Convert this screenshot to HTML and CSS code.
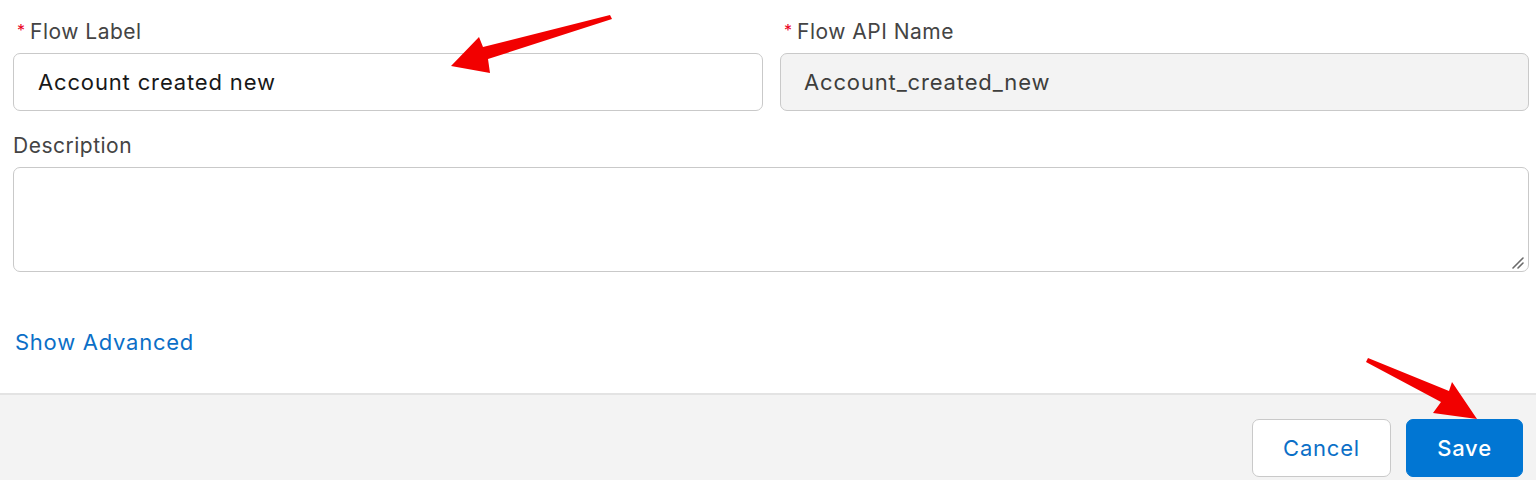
FILE: index.html
```html
<!DOCTYPE html>
<html lang="en">
<head>
<meta charset="utf-8">
<title>New Flow</title>
<link rel="stylesheet" href="styles.css">
</head>
<body>
<div class="page">
  <form class="form">
    <div class="row">
      <div class="field">
        <label class="label"><abbr class="req">*</abbr>Flow Label</label>
        <input class="input" type="text" value="Account created new">
      </div>
      <div class="field">
        <label class="label"><abbr class="req">*</abbr>Flow API Name</label>
        <input class="input input-disabled" type="text" value="Account_created_new" readonly>
      </div>
    </div>
    <div class="field field-desc">
      <label class="label">Description</label>
      <div class="textarea">
        <svg class="grip" width="14" height="14" viewBox="0 0 14 14"><path d="M13 3 L3 13 M13 8 L8 13" stroke="#6b6b6b" stroke-width="1.6" stroke-linecap="round"/></svg>
      </div>
    </div>
    <a class="link" href="#">Show Advanced</a>
  </form>
  <footer class="footer">
    <button class="btn btn-neutral" type="button">Cancel</button>
    <button class="btn btn-brand" type="button">Save</button>
  </footer>
  <svg class="arrows" width="1536" height="480" viewBox="0 0 1536 480">
    <polygon fill="#f20000" points="451,66 479,37 483,47 610,15 612,19 488,59 490,73"/>
    <polygon fill="#f20000" points="1477,419 1433,413 1441,402 1366,362 1368,358 1449,391 1452,382"/>
  </svg>
</div>
</body>
</html>
```
FILE: styles.css
```css
* { box-sizing: border-box; }
html, body { margin: 0; padding: 0; background: #ffffff; }
body {
  font-family: Inter, "Liberation Sans", Arial, sans-serif;
  width: 1536px;
  height: 480px;
  overflow: hidden;
}
.page { position: relative; width: 1536px; height: 480px; display: flex; flex-direction: column; }
.form {
  padding: 20px 7px 0 13px;
  display: flex;
  flex-direction: column;
  height: 393px;
}
.row {
  display: grid;
  grid-template-columns: 750px 749px;
  column-gap: 17px;
}
.field { display: flex; flex-direction: column; }
.label {
  font-size: 21px;
  letter-spacing: 0.5px;
  line-height: 24px;
  height: 24px;
  color: #444444;
  margin-bottom: 9px;
  padding-left: 4px;
  display: flex;
  align-items: center;
}
.req {
  color: #ea001e;
  text-decoration: none;
  font-size: 16px;
  margin-right: 5px;
  letter-spacing: 0;
  position: relative;
  top: -2px;
}
.input {
  height: 58px;
  border: 1.5px solid #c9c9c9;
  border-radius: 7px;
  background: #ffffff;
  font-family: inherit;
  font-size: 22px;
  letter-spacing: 0.85px;
  color: #181818;
  padding: 0 0 0 24px;
  outline: none;
}
.input-disabled {
  background: #f3f3f3;
  color: #3e3e3c;
  padding-left: 23px;
}
.field-desc { margin-top: 23px; }
.field-desc .label { padding-left: 0; }
.textarea {
  height: 105px;
  border: 1.5px solid #c9c9c9;
  border-radius: 7px;
  background: #fff;
  display: flex;
  justify-content: flex-end;
  align-items: flex-end;
  padding: 0 4px 2px 0;
}
.grip { display: block; }
.link {
  margin-top: 58px;
  font-size: 22px;
  letter-spacing: 0.75px;
  line-height: 24px;
  color: #0b6fc7;
  text-decoration: none;
  padding-left: 2px;
  align-self: flex-start;
}
.footer {
  flex: 1;
  background: #f3f3f3;
  border-top: 2px solid #e3e3e3;
  display: flex;
  justify-content: flex-end;
  align-items: flex-start;
  gap: 15px;
  padding: 24px 13px 0 0;
}
.btn {
  height: 58px;
  border-radius: 7px;
  font-family: inherit;
  font-size: 22px;
  letter-spacing: 0.8px;
  padding: 0;
  cursor: pointer;
}
.btn-neutral {
  width: 139px;
  background: #ffffff;
  border: 1.5px solid #c9c9c9;
  color: #0b6fc7;
}
.btn-brand {
  width: 117px;
  background: #0176d3;
  border: 1.5px solid #0176d3;
  color: #ffffff;
  font-weight: 500;
}
.arrows {
  position: absolute;
  left: 0;
  top: 0;
  pointer-events: none;
}
```
